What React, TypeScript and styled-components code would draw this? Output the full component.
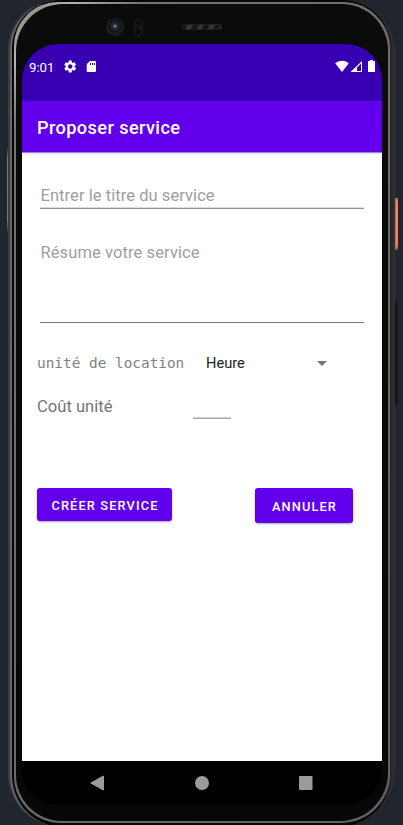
import React from "react";
import styled, { createGlobalStyle } from "styled-components";

const GlobalStyle = createGlobalStyle`
  * { box-sizing: border-box; }
  body { margin: 0; background: #21252e; font-family: Roboto, sans-serif; }
`;

const Stage = styled.main`
  position: relative;
  width: 403px;
  height: 825px;
  overflow: hidden;
  padding-left: 8px;
  background: #21252e;
`;

const Chassis = styled.div`
  width: 387px;
  height: 829px;
  margin-top: -1px;
  padding: 1px 0 0 2px;
  border-radius: 50px 54px 58px 54px;
  background: linear-gradient(90deg, #3c3d40 0, #242528 30px, #242527 360px, #303032 100%);
`;

const Rim = styled.div`
  width: 383px;
  height: 827px;
  border-left: 2px solid #66676a;
  border-radius: 49px 52px 56px 52px;
  background: linear-gradient(90deg, #060606 0 365px, #222224 376px, #2b2b2d 100%);
  padding: 2px 0 0 2px;
`;

const Edge = styled.div`
  width: 376px;
  height: 821px;
  padding: 2px 2px 2px 2px;
  border-radius: 44px 47px 49px 47px;
  background: linear-gradient(135deg, #777774 0, #b5b5b0 42px, #747472 90px, #626262 100%);
`;

const Bezel = styled.div`
  height: 100%;
  padding: 0 6px;
  border-radius: 47px 46px 48px 46px;
  background: linear-gradient(#0b0b0c, #070709);
`;

const SensorBar = styled.div`
  display: flex;
  align-items: center;
  height: 40px;
  padding: 6px 0 0 84px;
`;

const Camera = styled.div`
  width: 18px;
  height: 18px;
  border-radius: 50%;
  background: radial-gradient(circle at 50% 45%, #777d85 0 1px, #202634 2px 4px, #111216 5px 6px, #1b1c1d 7px 9px);
`;

const Sensor = styled.div`
  width: 9px;
  height: 19px;
  margin-left: 10px;
  border: 1px solid #1a1a1b;
  border-radius: 5px;
  background: radial-gradient(circle at 50% 23%, #080809 1px, transparent 3px),
    radial-gradient(circle at 50% 77%, #080809 1px, #131314 3px);
`;

const Speaker = styled.div`
  width: 40px;
  height: 6px;
  margin-left: 39px;
  border: 1px solid #202021;
  border-radius: 3px;
  background: repeating-linear-gradient(115deg, #151515 0 3px, #3c3c3c 6px 7px, #171717 10px);
`;

const Screen = styled.div`
  display: flex;
  flex-direction: column;
  width: 360px;
  height: 761px;
  overflow: hidden;
  border-radius: 36px;
  background: #000;
`;

const StatusBar = styled.div`
  display: flex;
  align-items: flex-start;
  flex: 0 0 57px;
  padding: 15px 6px 0 7px;
  background: #3700b3;
  color: #fff;
`;

const Clock = styled.span`
  width: 35px;
  padding-top: 1px;
  font-size: 13.2px;
  line-height: 16px;
`;

const StatusIcon = styled.svg<{ $gap?: number }>`
  display: block;
  flex: none;
  margin-left: ${(p) => p.$gap ?? 0}px;
  fill: currentColor;
`;

const Spacer = styled.div`
  flex: 1;
`;

const Toolbar = styled.header`
  z-index: 1;
  flex: 0 0 52px;
  padding: 0 15px;
  border-bottom: 1px solid #a878ee;
  background: #6200ee;
  box-shadow: 0 1px 2px rgba(0, 0, 0, 0.12);
`;

const Title = styled.h1`
  margin: 0;
  padding-top: 2px;
  color: #fff;
  font-size: 18.2px;
  font-weight: 500;
  line-height: 49px;
  letter-spacing: 0.38px;
`;

const Form = styled.form`
  flex: 1;
  padding: 29px 18px 0;
  background: #fff;
`;

const TextInput = styled.input`
  display: block;
  width: 324px;
  height: 27px;
  margin: 0;
  padding: 1px 0 0;
  border: 0;
  border-bottom: 1px solid #919191;
  box-shadow: inset 0 -1px #dcdcdc;
  outline: 0;
  font: 16.5px/20px Roboto, sans-serif;
  letter-spacing: 0.06px;
  text-indent: 0.5px;
  &::placeholder { color: #9e9e9e; opacity: 1; }
`;

const Summary = styled.textarea`
  display: block;
  width: 324px;
  height: 81px;
  margin: 33px 0 0;
  padding: 1px 0 0;
  border: 0;
  border-bottom: 1px solid #777;
  outline: 0;
  resize: none;
  font: 16.5px/20px Roboto, sans-serif;
  letter-spacing: 0.1px;
  text-indent: 0.5px;
  &::placeholder { color: #9e9e9e; opacity: 1; }
`;

const Row = styled.div<{ $top: number }>`
  display: flex;
  align-items: flex-start;
  margin: ${(p) => p.$top}px 0 0 -3px;
`;

const Label = styled.label<{ $mono?: boolean }>`
  flex: 0 0 ${(p) => (p.$mono ? 169 : 156)}px;
  padding-top: ${(p) => (p.$mono ? 0 : 1)}px;
  color: ${(p) => (p.$mono ? "#818181" : "#757575")};
  font-family: ${(p) => (p.$mono ? '"DejaVu Sans Mono", monospace' : "Roboto, sans-serif")};
  font-size: ${(p) => (p.$mono ? 14.4 : 16.6)}px;
  line-height: 20px;
  white-space: nowrap;
`;

const Spinner = styled.div`
  display: flex;
  align-items: center;
  justify-content: space-between;
  width: 121px;
  height: 20px;
  color: #212121;
  font-size: 14.6px;
`;

const CostInput = styled.input`
  width: 38px;
  height: 23px;
  padding: 0;
  border: 0;
  border-bottom: 1px solid #aaa;
  outline: 0;
  box-shadow: inset 0 -1px #d0d0d0;
`;

const Actions = styled.div`
  display: flex;
  align-items: flex-start;
  justify-content: space-between;
  margin: 69px 11px 0 -3px;
`;

const Button = styled.button<{ $w: number; $h: number }>`
  width: ${(p) => p.$w}px;
  height: ${(p) => p.$h}px;
  padding: 1px 0 0 1px;
  border: 0;
  border-radius: 3px;
  background: #6200ee;
  box-shadow: 0 1px 2px rgba(0, 0, 0, 0.35);
  color: #fff;
  font: 500 12.8px Roboto, sans-serif;
  letter-spacing: 1.13px;
  white-space: nowrap;
`;

const NavBar = styled.nav`
  display: flex;
  align-items: center;
  flex: 0 0 44px;
  padding-left: 68px;
  background: #000;
  color: #9b9b9b;
`;

const Glyph = styled.svg<{ $gap?: number }>`
  display: block;
  margin-left: ${(p) => p.$gap ?? 0}px;
  fill: currentColor;
`;

const SideKey = styled.div<{ $top: number; $height: number; $power?: boolean }>`
  position: absolute;
  top: ${(p) => p.$top}px;
  left: 395px;
  width: 3px;
  height: ${(p) => p.$height}px;
  border-radius: 1px;
  background: ${(p) =>
    p.$power ? "linear-gradient(#b56b56, #f18767 5px, #ef8161 47px, #864a3b)" : "#191a1c"};
  border-left: ${(p) => (p.$power ? "1px solid #c76b53" : "1px solid #101112")};
`;

const LeftKey = styled.div`
  position: absolute;
  left: 7px;
  top: 149px;
  width: 1px;
  height: 83px;
  background: linear-gradient(#383a3e, #7b7c80 10px, #77787b 72px, #35373b);
`;

export default function App() {
  return (
    <>
      <GlobalStyle />
      <Stage>
        <Chassis>
          <Rim>
            <Edge>
              <Bezel>
                <SensorBar>
                  <Camera />
                  <Sensor />
                  <Speaker />
                </SensorBar>
                <Screen>
                  <StatusBar>
                    <Clock>9:01</Clock>
                    <StatusIcon width="13" height="15" viewBox="2 0 21 24">
                      <path d="M19.14 12.94c.04-.3.06-.61.06-.94 0-.32-.02-.64-.07-.94l2.03-1.58c.18-.14.23-.41.12-.61l-1.92-3.32c-.12-.22-.37-.29-.59-.22l-2.39.96c-.5-.38-1.03-.7-1.62-.94l-.36-2.54c-.04-.24-.24-.41-.48-.41h-3.84c-.24 0-.43.17-.47.41l-.36 2.54c-.59.24-1.13.57-1.62.94l-2.39-.96c-.22-.08-.47 0-.59.22L2.74 8.87c-.12.21-.08.47.12.61l2.03 1.58c-.05.3-.09.63-.09.94s.02.64.07.94l-2.03 1.58c-.18.14-.23.41-.12.61l1.92 3.32c.12.22.37.29.59.22l2.39-.96c.5.38 1.03.7 1.62.94l.36 2.54c.05.24.24.41.48.41h3.84c.24 0 .44-.17.47-.41l.36-2.54c.59-.24 1.13-.56 1.62-.94l2.39.96c.22.08.47 0 .59-.22l1.92-3.32c.12-.22.07-.47-.12-.61l-2.01-1.58zM12 15.6c-1.98 0-3.6-1.62-3.6-3.6s1.62-3.6 3.6-3.6 3.6 1.62 3.6 3.6-1.62 3.6-3.6 3.6z" />
                    </StatusIcon>
                    <StatusIcon $gap={9} width="11" height="14" viewBox="0 0 11 14">
                      <path d="M4 2h5q1 0 1 1v9q0 1-1 1H1.7q-1 0-1-1V5.3zM4 4v2h1V4zm2 0v2h1V4zm2 0v2h1V4z" fillRule="evenodd" />
                    </StatusIcon>
                    <Spacer />
                    <StatusIcon width="14" height="14" viewBox="0 0 14 14">
                      <path d="M.2 4.2Q7-.5 13.8 4.2L7 13z" />
                    </StatusIcon>
                    <StatusIcon $gap={1} width="12" height="14" viewBox="0 0 12 14">
                      <path d="M12 2v11H.5zm-1 2.6L7 8.5V12h4z" fillRule="evenodd" />
                    </StatusIcon>
                    <StatusIcon $gap={6} width="8" height="14" viewBox="0 0 8 14">
                      <path d="M2 1h3v1h1.5q.5 0 .5.5v10q0 .5-.5.5h-6q-.5 0-.5-.5v-10Q0 2 .5 2H2z" />
                    </StatusIcon>
                  </StatusBar>
                  <Toolbar>
                    <Title>Proposer service</Title>
                  </Toolbar>
                  <Form onSubmit={(e) => e.preventDefault()}>
                    <TextInput placeholder="Entrer le titre du service" />
                    <Summary placeholder="Résume votre service" />
                    <Row $top={30}>
                      <Label $mono>unité de location</Label>
                      <Spinner>
                        Heure
                        <Glyph width="10" height="5" viewBox="0 0 10 5" color="#757575">
                          <path d="M0 0h10L5 5z" />
                        </Glyph>
                      </Spinner>
                    </Row>
                    <Row $top={23}>
                      <Label htmlFor="cost">Coût unité</Label>
                      <CostInput id="cost" />
                    </Row>
                    <Actions>
                      <Button type="submit" $w={135} $h={33}>CRÉER SERVICE</Button>
                      <Button type="button" $w={98} $h={35}>ANNULER</Button>
                    </Actions>
                  </Form>
                  <NavBar>
                    <Glyph width="14" height="16" viewBox="0 0 14 16">
                      <path d="M12.8.8q1.2-.5 1.2.7v13q0 1.2-1.2.7L.8 8.6q-.8-.6 0-1.2z" />
                    </Glyph>
                    <Glyph $gap={91} width="14" height="14" viewBox="0 0 14 14">
                      <circle cx="7" cy="7" r="7" />
                    </Glyph>
                    <Glyph $gap={90} width="14" height="14" viewBox="0 0 14 14">
                      <rect width="13.5" height="14" rx="1" />
                    </Glyph>
                  </NavBar>
                </Screen>
              </Bezel>
            </Edge>
          </Rim>
        </Chassis>
        <LeftKey />
        <SideKey $top={198} $height={52} $power />
        <SideKey $top={302} $height={103} />
      </Stage>
    </>
  );
}
